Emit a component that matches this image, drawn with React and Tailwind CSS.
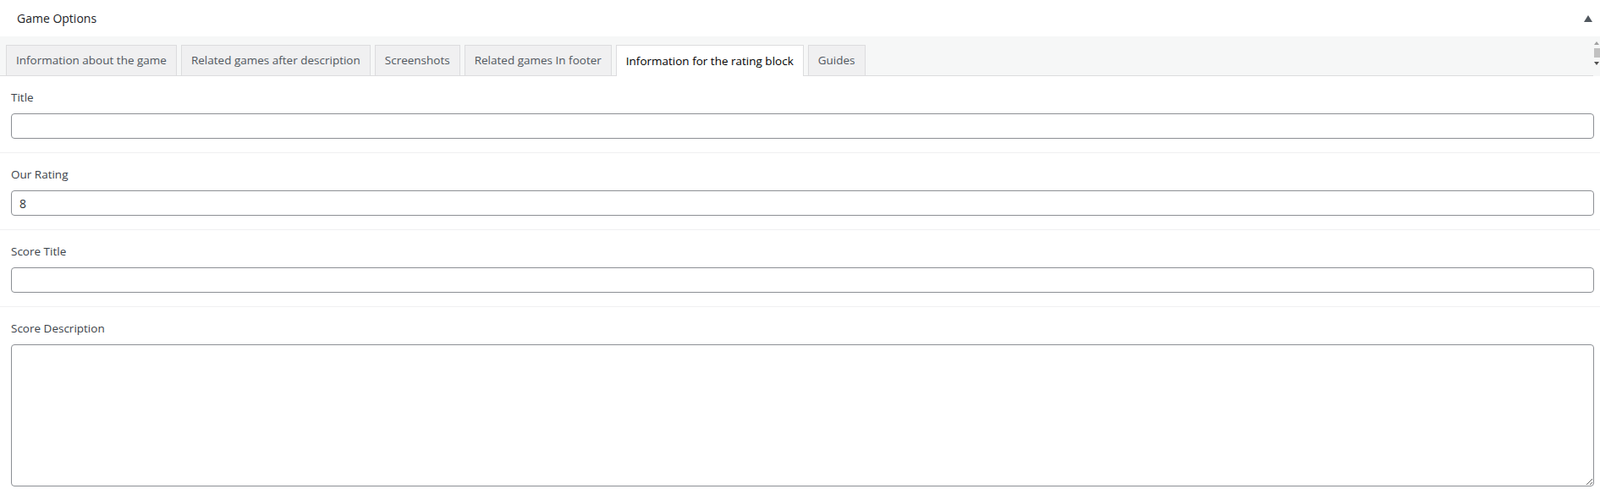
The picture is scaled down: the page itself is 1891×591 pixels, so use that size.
import React from 'react';

const tabs = [
    'Information about the game',
    'Related games after description',
    'Screenshots',
    'Related games In footer',
    'Information for the rating block',
    'Guides',
];

const Field = ({ label, value, area, last }) => (
    <div className={`pl-[13px] pr-[7px] pt-[16px] ${last ? 'pb-[17px]' : 'pb-[16px] border-b border-[#f0f0f1]'}`}>
        <div className="text-[13.5px] leading-[18px] text-[#3c434a] mb-[10px]">{label}</div>
        {area ? (
            <textarea
                className="block w-full h-[168px] border border-[#8c8f94] rounded-[4px] bg-white resize-y outline-none px-2 py-1 text-[14px]"
                defaultValue=""
            />
        ) : (
            <input
                className="block w-full h-[30px] border border-[#8c8f94] rounded-[4px] bg-white px-[9px] text-[14px] text-[#2c3338] outline-none"
                defaultValue={value || ''}
            />
        )}
    </div>
);

const App = () => {
    const active = 4;

    return (
        <div className="w-[1891px] min-h-[591px] bg-white font-['Open_Sans','Noto_Sans',sans-serif]">
            {/* header */}
            <div className="h-[43px] flex items-center justify-between pl-[20px] pr-[8px]">
                <span className="text-[14px] text-[#1d2327]">Game Options</span>
                <svg width="10" height="8" viewBox="0 0 10 8" className="mr-[1px]">
                    <polygon points="5,0 10,8 0,8" fill="#50575e" />
                </svg>
            </div>

            {/* tab bar */}
            <div className="flex">
                <div className="flex-1 flex items-end gap-[5px] pl-[7px] pt-[10px] h-[47px] bg-[#f6f7f7] border-b border-[#dcdcde]">
                    {tabs.map((t, i) => (
                        <div
                            key={t}
                            className={`${i === active
                                ? 'bg-white text-[#000] h-[37px] -mb-px'
                                : 'bg-[#f0f0f1] text-[#50575e] h-[36px]'
                                } flex items-center px-[11px] border border-b-0 border-[#dcdcde] text-[13.5px] whitespace-nowrap`}
                        >
                            {t}
                        </div>
                    ))}
                </div>
                {/* small scrollbar of the tab strip */}
                <div className="w-[8px] h-[47px] bg-[#f6f7f7] flex flex-col items-center pt-[6px]">
                    <svg width="6" height="4" viewBox="0 0 6 4"><polygon points="3,0 6,4 0,4" fill="#a0a0a0" /></svg>
                    <div className="w-[7px] h-[11px] bg-[#c1c1c1] mt-[4px]" />
                    <svg width="6" height="4" viewBox="0 0 6 4" className="mt-[5px]"><polygon points="0,0 6,0 3,4" fill="#505050" /></svg>
                </div>
            </div>

            <Field label="Title" />
            <Field label="Our Rating" value="8" />
            <Field label="Score Title" />
            <Field label="Score Description" area last />
        </div>
    );
};

export default App;
